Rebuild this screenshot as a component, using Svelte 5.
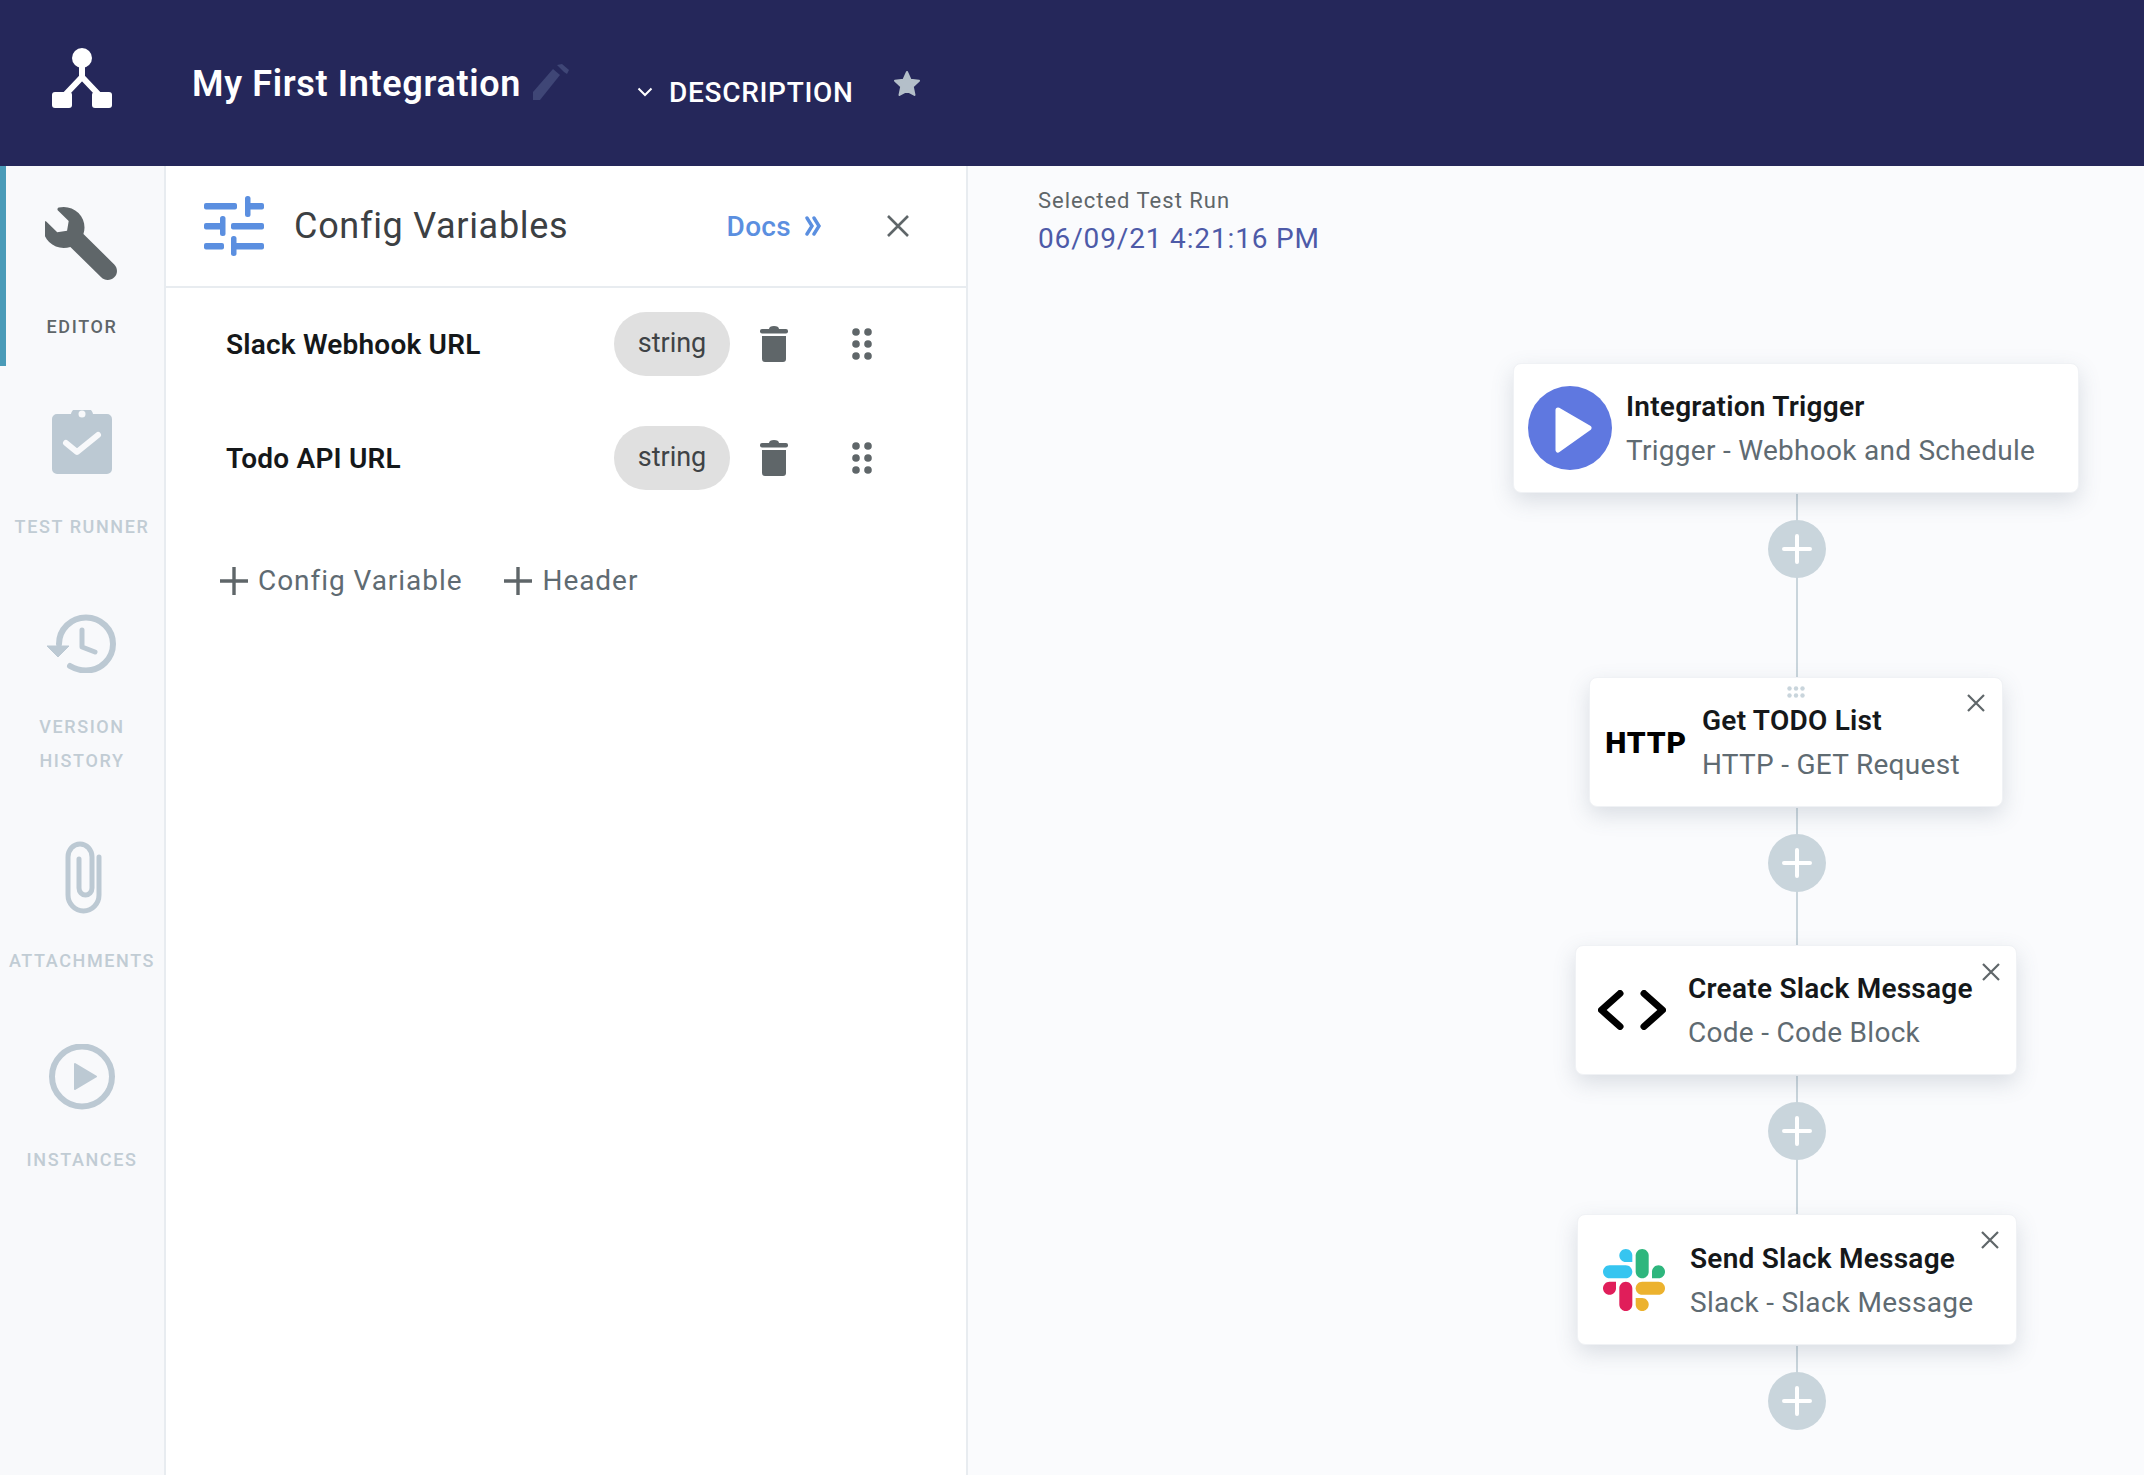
<script>
	const configVars = ['Slack Webhook URL', 'Todo API URL'];

	const nodes = [
		{ icon: 'trigger', title: 'Integration Trigger', sub: 'Trigger - Webhook and Schedule', x: 545, y: 197, w: 566, h: 130, fixed: true },
		{ icon: 'http', title: 'Get TODO List', sub: 'HTTP - GET Request', x: 621, y: 511, w: 414, h: 130, dots: true, cx: 17, cy: 16 },
		{ icon: 'code', title: 'Create Slack Message', sub: 'Code - Code Block', x: 607, y: 779, w: 442, h: 130, cx: 16, cy: 17 },
		{ icon: 'slack', title: 'Send Slack Message', sub: 'Slack - Slack Message', x: 609, y: 1048, w: 440, h: 131, cx: 17, cy: 16 }
	];

	const lines = [
		{ top: 328, h: 184 },
		{ top: 642, h: 138 },
		{ top: 910, h: 138 },
		{ top: 1180, h: 40 }
	];

	const plusButtons = [383, 697, 965, 1235];
</script>

<div class="app">
	<header class="topbar">
		<div class="logo">
			<svg width="60" height="60" viewBox="0 0 60 60">
				<circle cx="30" cy="10" r="10" fill="#fff" />
				<path d="M30 18V29L12 48M30 29L48 48" stroke="#fff" stroke-width="6" fill="none" />
				<rect x="0" y="44" width="20" height="16" rx="3" fill="#fff" />
				<rect x="40" y="44" width="20" height="16" rx="3" fill="#fff" />
			</svg>
		</div>
		<h1 class="title">My First Integration</h1>
		<svg class="pencil" width="36" height="36" viewBox="0 0 36 36">
			<path d="M0 36V28L20 5L27 11L7 36Z" fill="#3f4676" />
			<path d="M24 1L29 0L36 6L34 10L31 8Z" fill="#3f4676" />
		</svg>
		<svg class="chevron" width="16" height="10" viewBox="0 0 16 10">
			<path d="M1.5 1.5L8 8L14.5 1.5" stroke="#fff" stroke-width="2" fill="none" />
		</svg>
		<span class="description">DESCRIPTION</span>
		<svg class="star" width="28" height="27" viewBox="0 0 28 27">
			<path d="M14 2L17.6 9.8L26 10.8L19.8 16.6L21.5 25L14 20.8L6.5 25L8.2 16.6L2 10.8L10.4 9.8Z" fill="#b4bfc9" stroke="#b4bfc9" stroke-width="2" stroke-linejoin="round" />
		</svg>
	</header>

	<div class="body">
		<nav class="sidebar">
			<div class="nav-item active">
				<div class="nav-icon">
					<svg width="74" height="73" viewBox="14 0 512 512" preserveAspectRatio="none">
						<path transform="translate(512 0) scale(-1 1)" d="M507.73 109.1c-2.24-9.03-13.54-12.09-20.12-5.51l-74.36 74.36-67.88-11.31-11.31-67.88 74.36-74.36c6.62-6.62 3.43-17.9-5.66-20.16-47.38-11.74-99.55.91-136.58 37.93-39.64 39.64-50.55 97.1-34.05 147.2L18.74 402.76c-24.99 24.99-24.99 65.51 0 90.5 24.99 24.99 65.51 24.99 90.5 0l213.21-213.21c50.12 16.71 107.47 5.68 147.37-34.22 37.07-37.07 49.7-89.32 37.91-136.73z" fill="#5f6669" />
					</svg>
				</div>
				<span>EDITOR</span>
			</div>
			<div class="nav-item">
				<div class="nav-icon">
					<svg width="60" height="67" viewBox="0 3 60 67">
						<path d="M5 7H19C20 2 25 0 30 0S40 2 41 7H55A5 5 0 0 1 60 12V62A5 5 0 0 1 55 67H5A5 5 0 0 1 0 62V12A5 5 0 0 1 5 7Z" fill="#bcc9d3" />
						<circle cx="30" cy="7" r="3.5" fill="#f8f9fb" />
						<path d="M14 36L25 45L46 28" stroke="#f8f9fb" stroke-width="6" stroke-linecap="round" stroke-linejoin="round" fill="none" />
					</svg>
				</div>
				<span>TEST RUNNER</span>
			</div>
			<div class="nav-item">
				<div class="nav-icon">
					<svg width="71" height="59" viewBox="0 0 71 59">
						<path d="M12 30A27 26.5 0 1 1 39 56.5C33 56.5 28 55 23 52" stroke="#bcc9d3" stroke-width="6" stroke-linecap="round" fill="none" />
						<path d="M0 32H22L11 43Z" fill="#bcc9d3" stroke="#bcc9d3" stroke-width="1" stroke-linejoin="round" />
						<path d="M35 16V33L48 38" stroke="#bcc9d3" stroke-width="5" stroke-linecap="round" stroke-linejoin="round" fill="none" />
					</svg>
				</div>
				<span>VERSION<br />HISTORY</span>
			</div>
			<div class="nav-item">
				<div class="nav-icon">
					<svg width="39" height="73" viewBox="-2 0 39 73">
						<path d="M34 16V54A15.5 16 0 0 1 3 54V16A12 13 0 0 1 27 16V47A6.5 7 0 0 1 14 47V18" stroke="#bcc9d3" stroke-width="5" stroke-linecap="round" fill="none" />
					</svg>
				</div>
				<span>ATTACHMENTS</span>
			</div>
			<div class="nav-item">
				<div class="nav-icon">
					<svg width="66" height="67" viewBox="0 1 66 67">
						<circle cx="33" cy="33.5" r="30" stroke="#bcc9d3" stroke-width="6" fill="none" />
						<path d="M26 21L47 33.5L26 46Z" fill="#bcc9d3" stroke="#bcc9d3" stroke-width="2" stroke-linejoin="round" />
					</svg>
				</div>
				<span class="last-label">INSTANCES</span>
			</div>
		</nav>

		<section class="panel">
			<div class="panel-head">
				<svg class="sliders" width="60" height="60" viewBox="0 0 60 60">
					<g fill="#5b8fe0">
						<rect x="0" y="7" width="33" height="6.5" rx="2" />
						<rect x="41" y="7" width="19" height="6.5" rx="2" />
						<rect x="41" y="0" width="5.5" height="21" rx="2.5" />
						<rect x="0" y="27" width="20" height="6.5" rx="2" />
						<rect x="27" y="27" width="33" height="6.5" rx="2" />
						<rect x="16" y="20" width="5.5" height="20" rx="2.5" />
						<rect x="0" y="47" width="20" height="6.5" rx="2" />
						<rect x="27" y="47" width="33" height="6.5" rx="2" />
						<rect x="27" y="40" width="5.5" height="20" rx="2.5" />
					</g>
				</svg>
				<h2>Config Variables</h2>
				<span class="docs">Docs</span>
				<svg class="docs-arrow" width="18" height="20" viewBox="0 0 18 20">
					<path d="M3 2L8 10L3 18M10 2L15 10L10 18" stroke="#5b8fe0" stroke-width="3.4" stroke-linecap="round" fill="none" />
				</svg>
				<svg class="close" width="24" height="24" viewBox="0 0 24 24">
					<path d="M2 2L22 22M22 2L2 22" stroke="#5f6669" stroke-width="2.6" fill="none" />
				</svg>
			</div>

			<div class="vars">
				{#each configVars as name}
					<div class="var-row">
						<span class="var-name">{name}</span>
						<span class="pill">string</span>
						<svg class="trash" width="28" height="36" viewBox="0 0 28 36">
							<rect x="0" y="3" width="28" height="4.5" rx="2" fill="#5f6669" />
							<path d="M9 3C9 1 11 0 14 0S19 1 19 3Z" fill="#5f6669" />
							<path d="M2 10H26V33A3 3 0 0 1 23 36H5A3 3 0 0 1 2 33Z" fill="#5f6669" />
						</svg>
						<svg class="grip" width="20" height="32" viewBox="0 0 20 32">
							<g fill="#5f6669">
								<circle cx="4" cy="4" r="3.8" /><circle cx="16" cy="4" r="3.8" />
								<circle cx="4" cy="16" r="3.8" /><circle cx="16" cy="16" r="3.8" />
								<circle cx="4" cy="28" r="3.8" /><circle cx="16" cy="28" r="3.8" />
							</g>
						</svg>
					</div>
				{/each}
			</div>

			<div class="add-row">
				<button class="add">
					<svg width="28" height="28" viewBox="0 0 28 28"><path d="M14 0V28M0 14H28" stroke="#5f6669" stroke-width="3.4" /></svg>
					Config Variable
				</button>
				<button class="add">
					<svg width="28" height="28" viewBox="0 0 28 28"><path d="M14 0V28M0 14H28" stroke="#5f6669" stroke-width="3.4" /></svg>
					Header
				</button>
			</div>
		</section>

		<main class="canvas">
			<div class="run-info">
				<div class="run-label">Selected Test Run</div>
				<div class="run-date">06/09/21 4:21:16 PM</div>
			</div>

			{#each lines as line}
				<div class="line" style="top: {line.top}px; height: {line.h}px"></div>
			{/each}

			{#each plusButtons as top}
				<div class="plus" style="top: {top - 29}px">
					<svg width="30" height="30" viewBox="0 0 30 30">
						<path d="M15 2V28M2 15H28" stroke="#fff" stroke-width="4" stroke-linecap="round" />
					</svg>
				</div>
			{/each}

			{#each nodes as node}
				<div class="node" style="left: {node.x}px; top: {node.y}px; width: {node.w}px; height: {node.h}px">
					<div class="node-icon">
						{#if node.icon === 'trigger'}
							<svg width="84" height="84" viewBox="0 0 84 84">
								<circle cx="42" cy="42" r="42" fill="#5f78e0" />
								<path d="M30 24L61 42L30 64Z" fill="#fff" stroke="#fff" stroke-width="5" stroke-linejoin="round" />
							</svg>
						{:else if node.icon === 'http'}
							<span class="http">HTTP</span>
						{:else if node.icon === 'code'}
							<svg width="68" height="40" viewBox="0 0 68 40">
								<path d="M22 3.5L3.5 20L22 36.5M46 3.5L64.5 20L46 36.5" stroke="#000" stroke-width="7" stroke-linecap="round" stroke-linejoin="round" fill="none" />
							</svg>
						{:else}
							<svg width="62" height="62" viewBox="0 0 122.8 122.8">
								<path d="M25.8 77.6c0 7.1-5.8 12.9-12.9 12.9S0 84.7 0 77.6s5.8-12.9 12.9-12.9h12.9v12.9z" fill="#E01E5A" />
								<path d="M32.3 77.6c0-7.1 5.8-12.9 12.9-12.9s12.9 5.8 12.9 12.9v32.3c0 7.1-5.8 12.9-12.9 12.9s-12.9-5.8-12.9-12.9V77.6z" fill="#E01E5A" />
								<path d="M45.2 25.8c-7.1 0-12.9-5.8-12.9-12.9S38.1 0 45.2 0s12.9 5.8 12.9 12.9v12.9H45.2z" fill="#36C5F0" />
								<path d="M45.2 32.3c7.1 0 12.9 5.8 12.9 12.9s-5.8 12.9-12.9 12.9H12.9C5.8 58.1 0 52.3 0 45.2s5.8-12.9 12.9-12.9h32.3z" fill="#36C5F0" />
								<path d="M97 45.2c0-7.1 5.8-12.9 12.9-12.9s12.9 5.8 12.9 12.9-5.8 12.9-12.9 12.9H97V45.2z" fill="#2EB67D" />
								<path d="M90.5 45.2c0 7.1-5.8 12.9-12.9 12.9s-12.9-5.8-12.9-12.9V12.9C64.7 5.8 70.5 0 77.6 0s12.9 5.8 12.9 12.9v32.3z" fill="#2EB67D" />
								<path d="M77.6 97c7.1 0 12.9 5.8 12.9 12.9s-5.8 12.9-12.9 12.9-12.9-5.8-12.9-12.9V97h12.9z" fill="#ECB22E" />
								<path d="M77.6 90.5c-7.1 0-12.9-5.8-12.9-12.9s5.8-12.9 12.9-12.9h32.3c7.1 0 12.9 5.8 12.9 12.9s-5.8 12.9-12.9 12.9H77.6z" fill="#ECB22E" />
							</svg>
						{/if}
					</div>
					<div class="node-text">
						<div class="node-title">{node.title}</div>
						<div class="node-sub">{node.sub}</div>
					</div>
					{#if node.dots}
						<svg class="node-grip" width="18" height="12" viewBox="0 0 18 12">
							<g fill="#c9d5dc">
								<circle cx="2.5" cy="2.5" r="2.2" /><circle cx="9" cy="2.5" r="2.2" /><circle cx="15.5" cy="2.5" r="2.2" />
								<circle cx="2.5" cy="9.5" r="2.2" /><circle cx="9" cy="9.5" r="2.2" /><circle cx="15.5" cy="9.5" r="2.2" />
							</g>
						</svg>
					{/if}
					{#if !node.fixed}
						<svg class="node-close" style="right: {node.cx}px; top: {node.cy}px" width="18" height="18" viewBox="0 0 18 18">
							<path d="M1 1L17 17M17 1L1 17" stroke="#5f6669" stroke-width="2.2" fill="none" />
						</svg>
					{/if}
				</div>
			{/each}
		</main>
	</div>
</div>

<style>
	:global(body) {
		margin: 0;
		font-family: Roboto, 'Liberation Sans', sans-serif;
	}

	.app {
		display: flex;
		flex-direction: column;
		height: 1475px;
		overflow: hidden;
	}

	.topbar {
		display: flex;
		align-items: flex-start;
		flex: 0 0 166px;
		background: #25275a;
		color: #fff;
	}

	.logo {
		width: 60px;
		margin: 48px 80px 0 52px;
	}

	.logo svg {
		display: block;
	}

	.title {
		margin: 60px 0 0;
		font-size: 36px;
		line-height: 48px;
		font-weight: 600;
		letter-spacing: 0.65px;
	}

	.pencil {
		margin: 64px 0 0 12px;
	}

	.chevron {
		margin: 87px 0 0 68px;
	}

	.description {
		margin: 73px 0 0 16px;
		font-size: 28px;
		line-height: 40px;
		font-weight: 500;
		letter-spacing: 0.7px;
	}

	.star {
		margin: 70px 0 0 39px;
	}

	.body {
		display: flex;
		flex: 1;
		min-height: 0;
	}

	.sidebar {
		flex: 0 0 166px;
		box-sizing: border-box;
		background: #f8f9fb;
		border-right: 2px solid #e8ecf0;
	}

	.nav-item {
		display: flex;
		flex-direction: column;
		align-items: center;
		box-sizing: border-box;
		padding: 41px 0 22px;
		color: #c1ccd4;
		font-size: 18px;
		font-weight: 500;
		line-height: 34px;
		letter-spacing: 1.6px;
		text-align: center;
		white-space: nowrap;
	}

	.nav-item.active {
		color: #5f6669;
		box-shadow: inset 6px 0 0 #4a9bb8;
	}

	.nav-icon {
		display: flex;
		align-items: center;
		justify-content: center;
		height: 72px;
		margin-bottom: 31px;
	}

	.last-label {
		margin-top: -1px;
	}

	.panel {
		flex: 0 0 802px;
		box-sizing: border-box;
		background: #fff;
		border-right: 2px solid #e8ecf0;
	}

	.panel-head {
		display: flex;
		align-items: center;
		box-sizing: border-box;
		height: 122px;
		padding-left: 38px;
		border-bottom: 2px solid #e8ecf0;
	}

	.panel-head h2 {
		margin: 0 0 0 30px;
		font-size: 36px;
		font-weight: 400;
		color: #3c4043;
		letter-spacing: 0.7px;
	}

	.docs {
		margin-left: auto;
		font-size: 28px;
		font-weight: 500;
		color: #5b8fe0;
		letter-spacing: 0.3px;
	}

	.docs-arrow {
		margin-left: 13px;
	}

	.close {
		margin: 0 56px 0 64px;
	}

	.vars {
		display: flex;
		flex-direction: column;
		gap: 50px;
		padding: 24px 94px 0 60px;
	}

	.var-row {
		display: flex;
		align-items: center;
		height: 64px;
	}

	.var-name {
		font-size: 28px;
		font-weight: 600;
		color: #15181a;
		flex: 1;
		letter-spacing: 0.2px;
	}

	.pill {
		width: 116px;
		height: 64px;
		border-radius: 32px;
		background: #e0e0e0;
		color: #3f4346;
		font-size: 27px;
		line-height: 62px;
		text-align: center;
	}

	.trash {
		margin-left: 30px;
	}

	.grip {
		margin-left: 64px;
	}

	.add-row {
		display: flex;
		gap: 42px;
		padding: 74px 0 0 54px;
	}

	.add {
		display: flex;
		align-items: center;
		gap: 10px;
		padding: 0;
		border: 0;
		background: none;
		font-family: inherit;
		font-size: 28px;
		color: #5f6b72;
		letter-spacing: 0.95px;
	}

	.canvas {
		position: relative;
		flex: 1;
		background: #fafbfd;
	}

	.run-info {
		padding: 21px 0 0 70px;
	}

	.run-label {
		font-size: 22px;
		line-height: 28px;
		color: #5f6669;
		letter-spacing: 1px;
	}

	.run-date {
		margin-top: 6px;
		font-size: 28px;
		line-height: 36px;
		color: #4d5aa8;
		letter-spacing: 0.85px;
	}

	.line {
		position: absolute;
		left: 828px;
		width: 2px;
		background: #c9d5dc;
	}

	.plus {
		position: absolute;
		left: 800px;
		display: flex;
		align-items: center;
		justify-content: center;
		width: 58px;
		height: 58px;
		border-radius: 50%;
		background: #c9d5dc;
	}

	.node {
		position: absolute;
		display: flex;
		align-items: center;
		box-sizing: border-box;
		background: #fff;
		border: 1px solid #f0f2f5;
		border-radius: 8px;
		box-shadow: 0 8px 22px rgba(70, 90, 110, 0.18);
	}

	.node-icon {
		display: flex;
		align-items: center;
		justify-content: center;
		flex: 0 0 112px;
	}

	.node-icon svg {
		display: block;
	}

	.http {
		font-size: 30px;
		font-weight: 900;
		letter-spacing: 0.8px;
		color: #000;
	}

	.node-text {
		padding-top: 2px;
	}

	.node-title {
		font-size: 28px;
		line-height: 44px;
		font-weight: 600;
		color: #15181a;
		white-space: nowrap;
		letter-spacing: 0.25px;
	}

	.node-sub {
		font-size: 28px;
		line-height: 44px;
		color: #5f6b72;
		white-space: nowrap;
		letter-spacing: 0.28px;
	}

	.node-grip {
		position: absolute;
		left: 197px;
		top: 8px;
	}

	.node-close {
		position: absolute;
	}
</style>
